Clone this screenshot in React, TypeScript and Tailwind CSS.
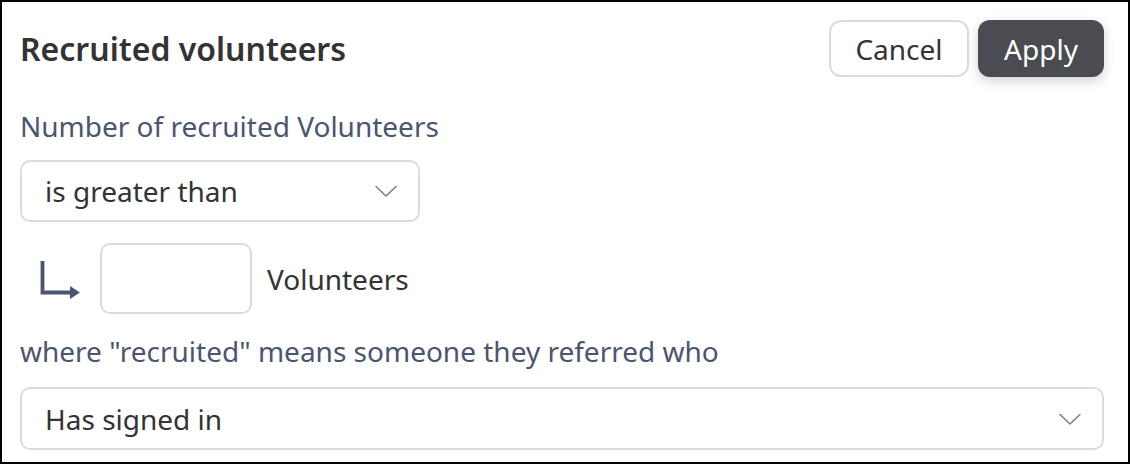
const Chevron = () => (
  <svg width="24" height="14" viewBox="0 0 24 14" fill="none">
    <polyline points="2,2.5 12,12 22,2.5" stroke="#767d8a" strokeWidth="1.5" strokeLinecap="round" strokeLinejoin="round" />
  </svg>
);

const CornerArrow = () => (
  <svg width="42" height="38" viewBox="0 0 42 38" fill="none">
    <path d="M2.5 0 V31.5 H31" stroke="#4b5570" strokeWidth="3.8" />
    <path d="M30 25 L40 31.5 L30 38 Z" fill="#4b5570" />
  </svg>
);

export default function App() {
  return (
    <div
      className="w-[1130px] h-[464px] border-2 border-black bg-white pl-[18px] pr-[24px] pt-[18px] text-[#333333]"
      style={{ fontFamily: '"Noto Sans", "Open Sans", sans-serif' }}
    >
      {/* Header */}
      <div className="flex h-[57px] items-center justify-between">
        <h1 className="text-[32px] font-semibold leading-[40px] text-[#333333]">Recruited volunteers</h1>
        <div className="flex items-center gap-[9px]">
          <button className="h-[57px] w-[140px] rounded-[12px] border-2 border-[#d9dbe0] bg-white text-[28px] text-[#333333]">
            Cancel
          </button>
          <button className="h-[57px] w-[126px] rounded-[12px] bg-[#4a4c52] text-[28px] text-white shadow-[0_4px_12px_rgba(0,0,0,0.18)]">
            Apply
          </button>
        </div>
      </div>

      <p className="mt-[30px] text-[28px] leading-[38px] text-[#4b5570]">Number of recruited Volunteers</p>

      <div className="mt-[15px] flex h-[62px] w-[400px] items-center justify-between rounded-[10px] border-2 border-[#dcdcdc] pl-[23px] pr-[20px]">
        <span className="text-[28px] leading-[38px]">is greater than</span>
        <Chevron />
      </div>

      <div className="mt-[21px] flex items-center">
        <div className="ml-[20px] mr-[18px] flex items-center pt-[2px]">
          <CornerArrow />
        </div>
        <div className="h-[71px] w-[152px] rounded-[10px] border-2 border-[#dcdcdc]" />
        <span className="ml-[15px] text-[28px] leading-[38px]">Volunteers</span>
      </div>

      <p className="mt-[18px] text-[28px] leading-[38px] text-[#4b5570]">
        where "recruited" means someone they referred who
      </p>

      <div className="mt-[17px] flex h-[63px] w-full items-center justify-between rounded-[10px] border-2 border-[#dcdcdc] pl-[23px] pr-[20px]">
        <span className="text-[28px] leading-[38px]">Has signed in</span>
        <Chevron />
      </div>
    </div>
  );
}
